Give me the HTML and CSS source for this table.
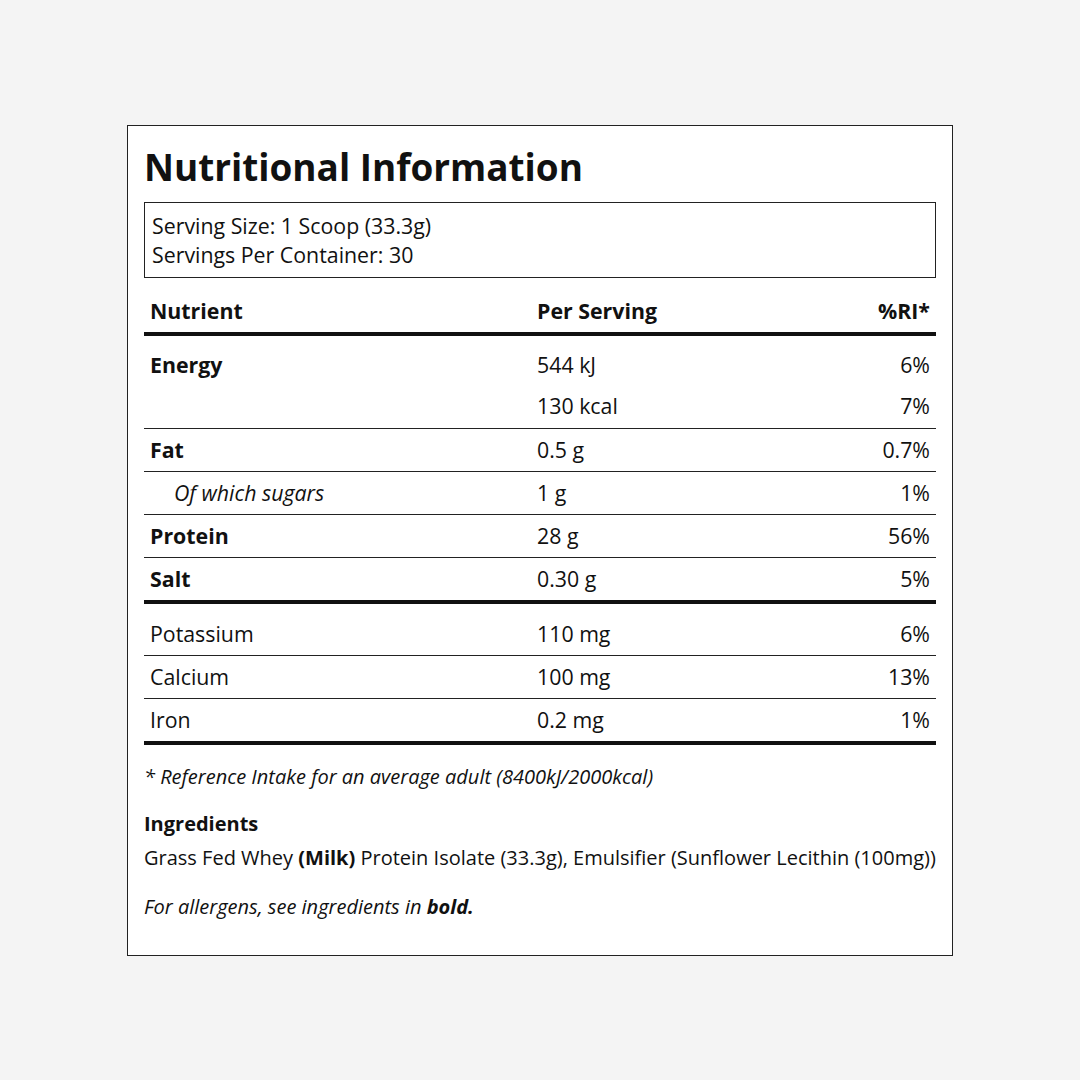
FILE: index.html
```html
<!DOCTYPE html>
<html lang="en">
<head>
<meta charset="utf-8">
<title>Nutritional Information</title>
<link rel="stylesheet" href="styles.css">
</head>
<body>
<main class="card">
  <h1 class="title">Nutritional Information</h1>
  <div class="serving">
    <div>Serving Size: 1 Scoop (33.3g)</div>
    <div>Servings Per Container: 30</div>
  </div>
  <table class="facts">
    <colgroup><col class="c1"><col class="c2"><col class="c3"></colgroup>
    <thead>
      <tr><th>Nutrient</th><th>Per Serving</th><th class="num">%RI*</th></tr>
    </thead>
    <tbody class="main">
      <tr class="first nob"><td class="b">Energy</td><td>544 kJ</td><td class="num">6%</td></tr>
      <tr class="cont"><td></td><td>130 kcal</td><td class="num">7%</td></tr>
      <tr><td class="b">Fat</td><td>0.5 g</td><td class="num">0.7%</td></tr>
      <tr><td class="sub">Of which sugars</td><td>1 g</td><td class="num">1%</td></tr>
      <tr><td class="b">Protein</td><td>28 g</td><td class="num">56%</td></tr>
      <tr class="last"><td class="b">Salt</td><td>0.30 g</td><td class="num">5%</td></tr>
    </tbody>
    <tbody class="minerals">
      <tr class="first"><td>Potassium</td><td>110 mg</td><td class="num">6%</td></tr>
      <tr><td>Calcium</td><td>100 mg</td><td class="num">13%</td></tr>
      <tr class="last"><td>Iron</td><td>0.2 mg</td><td class="num">1%</td></tr>
    </tbody>
  </table>
  <p class="note">* Reference Intake for an average adult (8400kJ/2000kcal)</p>
  <h2 class="ing-title">Ingredients</h2>
  <p class="ing">Grass Fed Whey <strong>(Milk)</strong> Protein Isolate (33.3g), Emulsifier (Sunflower Lecithin (100mg))</p>
  <p class="allergen">For allergens, see ingredients in <strong>bold.</strong></p>
</main>
</body>
</html>
```

FILE: styles.css
```css
html, body {
  margin: 0;
  padding: 0;
}
body {
  background: #f4f4f4;
  font-family: "Open Sans", "Liberation Sans", sans-serif;
  color: #111;
  height: 1080px;
  display: flex;
  align-items: center;
  justify-content: center;
}
.card {
  box-sizing: border-box;
  width: 826px;
  height: 831px;
  background: #fff;
  border: 1px solid #222;
  padding: 16px 16px 16px;
}
.title {
  margin: 0;
  font-size: 36.9px;
  font-weight: 700;
  line-height: 50px;
}
.serving {
  margin-top: 10px;
  border: 1px solid #222;
  padding: 8px 7px 8px;
  font-size: 21.33px;
  line-height: 29px;
}
.facts {
  width: 100%;
  margin-top: 12px;
  border-collapse: collapse;
  font-size: 21.33px;
  line-height: 30px;
}
.c1 { width: 387px; }
.c3 { width: 120px; }
.facts th, .facts td {
  padding: 6px 6px;
  text-align: left;
  vertical-align: top;
}
.facts th {
  font-weight: 700;
}
.facts thead tr {
  border-bottom: 4px solid #111;
}
.facts .num {
  text-align: right;
}
.facts tbody tr {
  border-bottom: 1px solid #222;
}
.facts tbody tr.nob {
  border-bottom: none;
}
.facts tbody tr.first td {
  padding-top: 14.5px;
}
.facts tbody tr.cont td {
  padding-top: 5px;
  padding-bottom: 7px;
}
.facts tbody tr.last {
  border-bottom: 4px solid #111;
}
.b {
  font-weight: 700;
}
.facts td.sub {
  font-style: italic;
  padding-left: 30px;
}
.note {
  margin: 18px 0 0;
  font-size: 20px;
  line-height: 28px;
  font-style: italic;
}
.ing-title {
  margin: 19px 0 0;
  font-size: 20px;
  font-weight: 700;
  line-height: 28px;
}
.ing {
  margin: 6px 0 0;
  font-size: 20px;
  line-height: 28px;
}
.allergen {
  margin: 21px 0 0;
  font-size: 20px;
  line-height: 28px;
  font-style: italic;
}
```
